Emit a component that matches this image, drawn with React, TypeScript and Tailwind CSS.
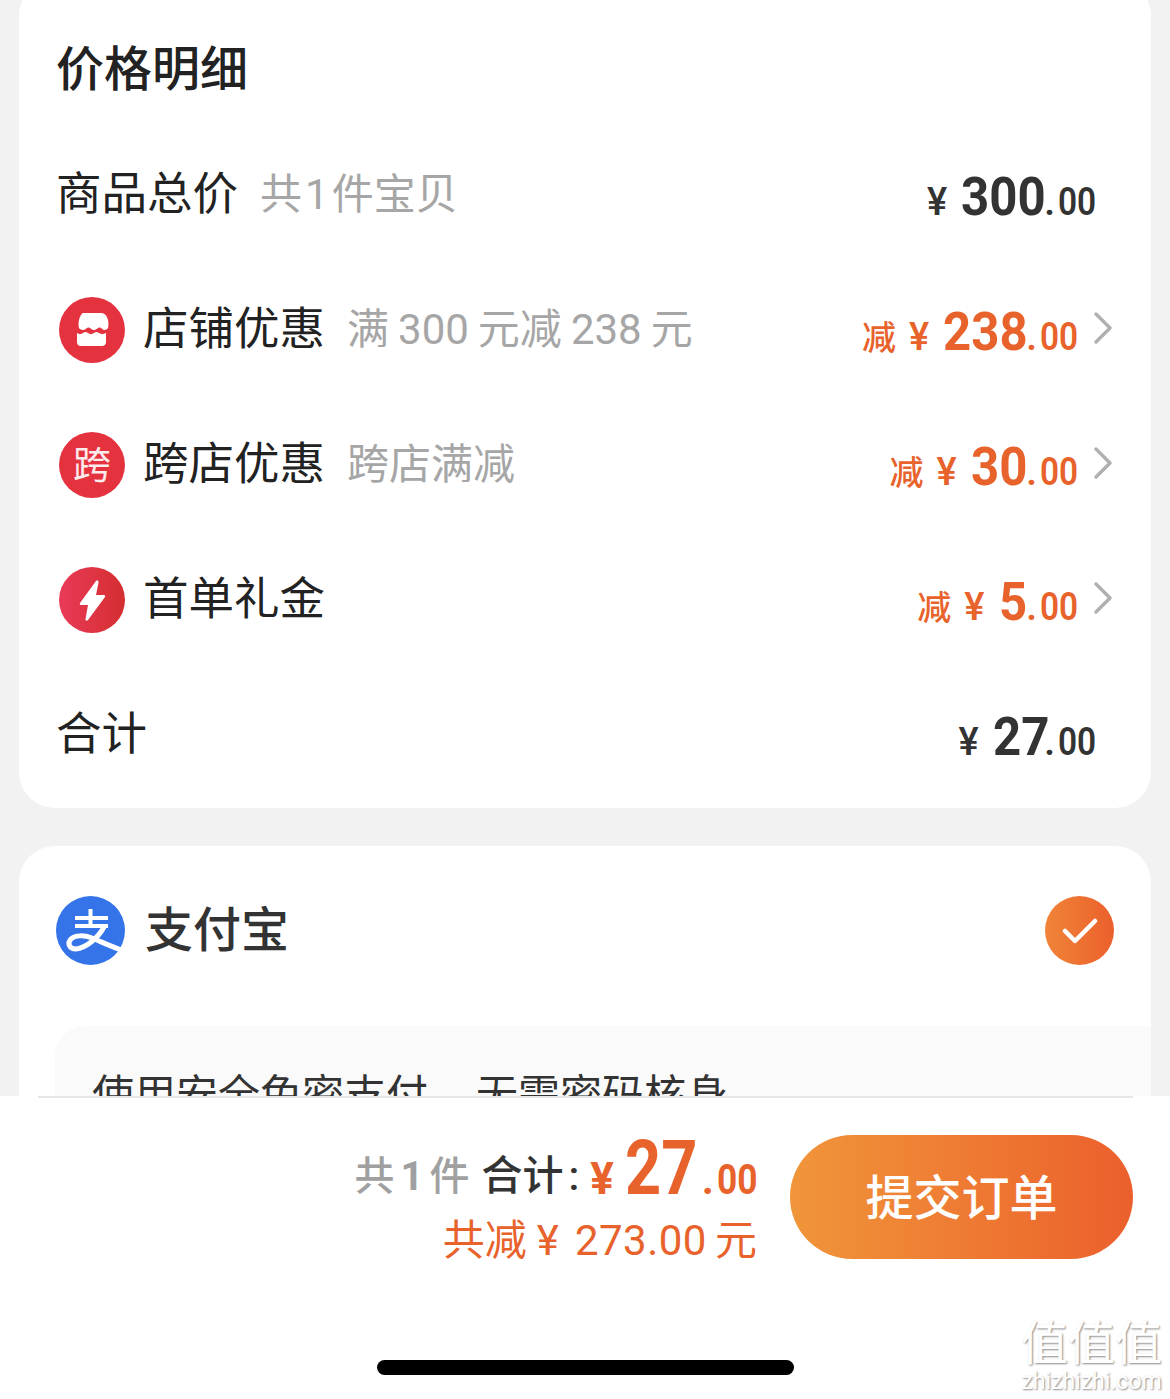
function Cond({ text, width, className = "" }: { text: string; width: number; className?: string }) {
  return (
    <span className="inline-block whitespace-nowrap" style={{ width }}>
      <span className={`inline-block origin-left whitespace-nowrap ${className}`}>{text}</span>
    </span>
  );
}

function Price({ value, minus, dark, digit = 27.7 }: { value: string; minus?: boolean; dark?: boolean; digit?: number }) {
  const color = dark ? "text-[#333333]" : "text-[#e8622c]";
  return (
    <div className={`flex items-baseline font-['Roboto','Noto_Sans_CJK_SC',sans-serif] leading-none ${color}`}>
      {minus && <span className="mr-[13px] text-[34px] font-medium">减</span>}
      <span className="mr-[14px] text-[38px] font-medium">¥</span>
      <Cond text={value} width={value.length * digit} className="scale-x-[0.91] text-[54px] font-bold" />
      <span className="mr-[3px] text-[38px] font-semibold">.</span>
      <Cond text="00" width={38} className="scale-x-[0.88] text-[38px] font-semibold" />
    </div>
  );
}

function Chevron({ className = "" }: { className?: string }) {
  return (
    <svg viewBox="0 0 20 32" className={`h-[32px] w-[20px] ${className}`} fill="none" stroke="#b0b0b0" strokeWidth="3.4" strokeLinecap="round" strokeLinejoin="round">
      <path d="M3 2l14 14L3 30" />
    </svg>
  );
}

function ShopIcon() {
  return (
    <svg viewBox="0 0 66 66" className="h-[66px] w-[66px]">
      <circle cx="33" cy="33" r="33" fill="#e5323f" />
      <path d="M24 16h18c4 0 6 3 7 7 .6 3 .6 6 0 8-2 2.500-4 2.500-6 .8-2-1.800-3-1.800-5 0-2 1.700-4 1.700-6 0-2-1.700-3-1.700-5 0-2 1.700-5 1.700-7-.8-.6-2-.6-5 0-8 1-4 3-7 4-7z" fill="#fff" />
      <path d="M18 36c2 1.500 4 1.500 6 0 2-1.500 3-1.500 5 0 2 1.500 4 1.500 6 0 2-1.500 3-1.500 5 0 2 1.500 4 1.500 7 0v9c0 2.500-1.500 4-4 4H22c-2.500 0-4-1.500-4-4z" fill="#fff" />
    </svg>
  );
}

function BoltIcon() {
  return (
    <svg viewBox="0 0 66 66" className="h-[66px] w-[66px]">
      <defs>
        <linearGradient id="boltGrad" x1="0" y1="0" x2="1" y2="0">
          <stop offset="0" stopColor="#e93a58" />
          <stop offset="1" stopColor="#d42e30" />
        </linearGradient>
      </defs>
      <circle cx="33" cy="33" r="33" fill="url(#boltGrad)" />
      <path d="M37 14c1-1 3-.5 2.500 1.500L37 28h8c1 0 1.500 1 1 2L29 53c-1 1.500-3 .5-2.500-1L29 38h-7c-1 0-1.500-1-1-2z" fill="#fff" />
    </svg>
  );
}

function KuaIcon() {
  return (
    <div className="flex h-[66px] w-[66px] items-center justify-center rounded-full bg-[#e5323f] text-[38px] leading-none text-white/90">
      跨
    </div>
  );
}

function AlipayIcon() {
  return (
    <svg viewBox="0 0 69 69" className="h-[69px] w-[69px]">
      <circle cx="34.500" cy="34.500" r="34.500" fill="#3474e8" />
      <g fill="none" stroke="#fff">
        <path d="M34.500 13v16" strokeWidth="4" />
        <path d="M19 22h33" strokeWidth="4" />
        <path d="M19 30h33" strokeWidth="4" />
        <path d="M48 31C42 42 30 52 20 53 13 53 11 47 15 43c4-4 13-4 21-1 10 4 20 9 31 12.500" strokeWidth="5" />
      </g>
    </svg>
  );
}

function Row({ icon, title, sub, value, minus, chevron, dark, digit }: { icon?: React.ReactNode; title: string; sub?: React.ReactNode; value: string; minus?: boolean; chevron?: boolean; dark?: boolean; digit?: number }) {
  return (
    <div className="flex h-[135px] items-center justify-between">
      <div className="flex items-center">
        {icon && <div className="ml-[2px] mr-[19px] shrink-0">{icon}</div>}
        <span className="-ml-[1px] text-[45.500px] leading-none text-[#222222]">{title}</span>
        {sub && <span className="ml-[22px] text-[42px] leading-none text-[#a6a6a6]">{sub}</span>}
      </div>
      <div className="flex items-center">
        <div className="mt-[4px]">
          <Price value={value} minus={minus} dark={dark} digit={digit} />
        </div>
        {chevron ? <Chevron className="ml-[15px] mb-[4px]" /> : <div className="w-[17px]" />}
      </div>
    </div>
  );
}

export default function App() {
  return (
    <div className="relative flex h-[1399px] w-[1170px] flex-col overflow-hidden bg-[#f2f2f2] font-['Roboto','Noto_Sans_CJK_SC',sans-serif]">
      <div className="h-[1096px] shrink-0 overflow-hidden px-[19px]">
        <div className="-mt-[20px] rounded-[36px] bg-white px-[38px] pb-[6px] pt-[60px]">
          <h1 className="-ml-[1px] h-[60px] text-[48px] font-medium leading-[60px] text-[#222222]">价格明细</h1>
          <div className="mt-[27px]">
            <Row title="商品总价" sub={<>共<span className="mx-[3px]">1</span>件宝贝</>} value="300" dark />
            <Row
              icon={<ShopIcon />}
              title="店铺优惠"
              sub={<>满<span className="mx-[9px]">300</span>元减<span className="mx-[9px]">238</span>元</>}
              value="238"
              minus
              chevron
            />
            <Row icon={<KuaIcon />} title="跨店优惠" sub="跨店满减" value="30" minus chevron />
            <Row icon={<BoltIcon />} title="首单礼金" value="5" minus chevron />
            <Row title="合计" value="27" dark digit={25.7} />
          </div>
        </div>
        <div className="mt-[38px] h-[400px] overflow-hidden rounded-[36px] bg-white pl-[37px] pt-[50px]">
          <div className="flex h-[69px] items-center justify-between pr-[37px]">
            <div className="flex items-center">
              <AlipayIcon />
              <span className="ml-[20px] text-[48px] font-medium leading-none text-[#333333]">支付宝</span>
            </div>
            <div className="flex h-[69px] w-[69px] items-center justify-center rounded-full bg-gradient-to-r from-[#f08438] to-[#eb5f2c]">
              <svg viewBox="0 0 36 28" className="h-[28px] w-[36px]" fill="none" stroke="#fff" strokeWidth="4.500" strokeLinecap="round" strokeLinejoin="round">
                <path d="M3 14l10 10L33 4" />
              </svg>
            </div>
          </div>
          <div className="-ml-[1px] mt-[61px] flex h-[160px] items-start justify-between rounded-tl-[30px] bg-[#fafafa] pl-[37px] pr-[57px] pt-[45px]">
            <span className="text-[42px] leading-[50px] text-[#333333]">
              使用安全免密支付<span className="ml-[48px]">无需密码核身</span>
            </span>
            <Chevron className="mt-[32px]" />
          </div>
        </div>
      </div>

      <div className="relative flex-1 bg-white">
        <div className="absolute left-[38px] right-[37px] top-0 h-[2px] bg-[#e6e6e6]" />
        <div className="flex items-start justify-end pr-[37px] pt-[39px]">
          <div className="-mt-[5px] flex flex-col items-end">
            <div className="flex items-baseline leading-none">
              <span className="-translate-y-[4px] text-[40px] font-medium text-[#a0a0a0]">
                共<span className="mx-[6px] font-bold">1</span>件
              </span>
              <span className="ml-[12px] -translate-y-[4px] text-[41px] font-medium text-[#333333]">
                合计<span className="ml-[5px]">:</span>
              </span>
              <span className="ml-[11px] text-[44px] font-bold text-[#e8622c]">¥</span>
              <span className="ml-[11px] text-[#e8622c]">
                <Cond text="27" width={71} className="scale-x-[0.83] text-[76px] font-bold" />
              </span>
              <span className="ml-[6px] mr-[3px] text-[42px] font-bold text-[#e8622c]">.</span>
              <span className="text-[#e8622c]">
                <Cond text="00" width={40} className="scale-x-[0.84] text-[42px] font-bold" />
              </span>
            </div>
            <div className="mt-[14px] flex items-baseline text-[42px] leading-none text-[#e8622c]">
              <span>共减</span>
              <span className="ml-[10px]">¥</span>
              <span className="ml-[16px] tracking-[0.500px]">273.00</span>
              <span className="ml-[8px]">元</span>
            </div>
          </div>
          <button className="ml-[33px] flex h-[124px] w-[343px] items-center justify-center rounded-full bg-gradient-to-r from-[#f0953a] to-[#eb5f2c] pt-[4px] text-[48px] font-medium leading-none text-white">
            提交订单
          </button>
        </div>
        <div className="absolute left-[377px] top-[264px] h-[15px] w-[417px] rounded-full bg-black" />
        <div className="absolute right-[8px] top-[222px] flex flex-col items-center text-white [text-shadow:1px_1px_2px_#8a8a8a]">
          <span className="text-[47px] leading-[52px]">值值值</span>
          <span className="text-[23px] leading-[24px]">zhizhizhi.com</span>
        </div>
      </div>
    </div>
  );
}
